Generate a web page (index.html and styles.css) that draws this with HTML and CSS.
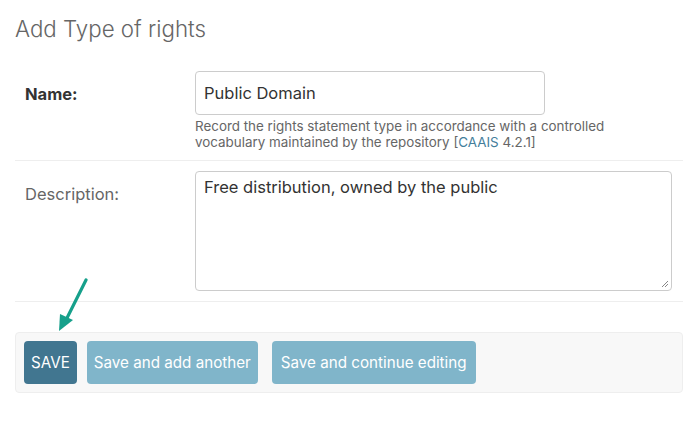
FILE: index.html
```html
<!DOCTYPE html>
<html>
<head>
<meta charset="utf-8">
<link rel="stylesheet" href="styles.css">
</head>
<body>
<div class="content">
  <h1 class="title">Add Type of rights</h1>
  <form class="form">
    <div class="form-row">
      <label class="label required">Name:</label>
      <div class="field">
        <div class="input">Public Domain</div>
        <div class="help">Record the rights statement type in accordance with a controlled<br>vocabulary maintained by the repository [<a class="link">CAAIS</a> 4.2.1]</div>
      </div>
    </div>
    <div class="form-row">
      <label class="label">Description:</label>
      <div class="field">
        <div class="textarea">Free distribution, owned by the public
          <svg class="grip" width="8" height="8" viewBox="0 0 8 8"><path d="M7 1L1 7M7 4L4 7" stroke="#888" stroke-width="1" fill="none"/></svg>
        </div>
      </div>
    </div>
    <div class="submit-row">
      <span class="btn btn-default">SAVE</span>
      <span class="btn btn-light">Save and add another</span>
      <span class="btn btn-light btn-wide-gap">Save and continue editing</span>
    </div>
  </form>
  <svg class="arrow" width="40" height="60" viewBox="0 0 40 60">
    <line x1="32" y1="2" x2="12" y2="42" stroke="#16a08b" stroke-width="3.2" stroke-linecap="round"/>
    <polygon points="5,53 6,36 19,42" fill="#16a08b"/>
  </svg>
</div>
</body>
</html>
```
FILE: styles.css
```css
html, body {
  margin: 0;
  padding: 0;
  background: #fff;
}
body {
  font-family: Inter, "Liberation Sans", sans-serif;
  color: #333;
}
.content {
  position: relative;
  padding: 16px 7px 0 15px;
}
.title {
  margin: 0 0 19px 0;
  font-size: 22.3px;
  font-weight: 300;
  color: #666;
  line-height: 26px;
}
.form-row {
  display: flex;
  padding: 10px;
  border-bottom: 1px solid #eee;
}
.label {
  width: 170px;
  flex: none;
  font-size: 16.5px;
  color: #666;
  padding-top: 13px;
  line-height: 20px;
}
.label.required {
  font-weight: 700;
  color: #333;
}
.field {
  display: flex;
  flex-direction: column;
}
.input {
  box-sizing: border-box;
  width: 350px;
  height: 44px;
  border: 1px solid #ccc;
  border-radius: 4px;
  padding: 0 8px;
  font-size: 16.5px;
  line-height: 42px;
  color: #333;
}
.help {
  margin-top: 3px;
  font-size: 13.4px;
  line-height: 16px;
  color: #666;
}
.link {
  color: #447e9b;
}
.textarea {
  position: relative;
  box-sizing: border-box;
  width: 477px;
  height: 120px;
  border: 1px solid #ccc;
  border-radius: 4px;
  padding: 5px 8px;
  font-size: 16.5px;
  line-height: 20px;
  color: #333;
}
.grip {
  position: absolute;
  right: 2px;
  bottom: 2px;
}
.submit-row {
  display: flex;
  margin-top: 30px;
  padding: 8px;
  background: #f8f8f8;
  border: 1px solid #eee;
  border-radius: 4px;
  gap: 10px;
}
.btn {
  height: 43px;
  line-height: 43px;
  padding: 0 7px;
  border-radius: 4px;
  color: #fff;
  font-size: 15.2px;
}
.btn-default {
  background: #417690;
}
.btn-light {
  background: #80b5ca;
}
.btn-wide-gap {
  margin-left: 4px;
  padding: 0 9px;
}
.arrow {
  position: absolute;
  left: 54px;
  top: 278px;
}
```
